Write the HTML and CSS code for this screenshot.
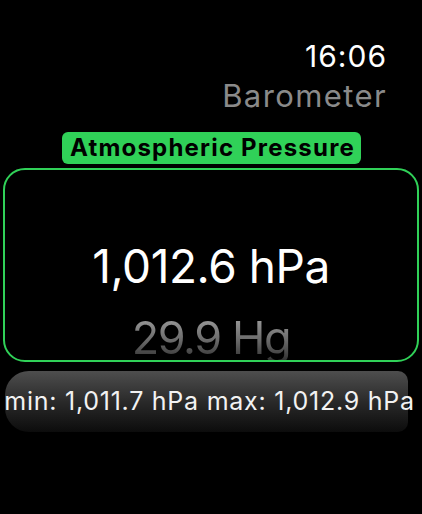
FILE: index.html
```html
<!DOCTYPE html>
<html lang="en">
<head>
<meta charset="utf-8">
<title>Barometer</title>
<link rel="stylesheet" href="styles.css">
</head>
<body>
<div class="screen">
  <header class="top">
    <div class="time">16:06</div>
    <div class="title">Barometer</div>
  </header>
  <div class="tag-row"><span class="tag">Atmospheric Pressure</span></div>
  <section class="card">
    <div class="main">1,012.6 hPa</div>
    <div class="sub">29.9 Hg</div>
  </section>
  <div class="range"><span class="range-text">min: 1,011.7 hPa max: 1,012.9 hPa</span></div>
</div>
</body>
</html>
```
FILE: styles.css
```css
html, body {
  margin: 0;
  padding: 0;
  background: #000;
}
body {
  font-family: Inter, "Noto Sans", "Liberation Sans", sans-serif;
  color: #fff;
}
.screen {
  width: 422px;
  height: 514px;
  display: flex;
  flex-direction: column;
  overflow: hidden;
}
.top {
  padding-top: 36px;
  padding-right: 35px;
  display: flex;
  flex-direction: column;
  align-items: flex-end;
}
.time {
  font-size: 30px;
  line-height: 40px;
  letter-spacing: 1px;
  color: #fff;
}
.title {
  font-size: 31px;
  line-height: 40px;
  letter-spacing: 1.4px;
  color: #8a8a8a;
}
.tag-row {
  margin-top: 16px;
  display: flex;
  justify-content: center;
  padding-left: 1px;
}
.tag {
  background: #30d158;
  color: #000;
  font-weight: 700;
  font-size: 24px;
  line-height: 32px;
  height: 32px;
  letter-spacing: 1.2px;
  padding: 0 6px 0 8px;
  border-radius: 6px;
}
.card {
  box-sizing: border-box;
  margin: 4px 3px 0 3px;
  height: 194px;
  border: 2px solid #30d158;
  border-radius: 22px;
  overflow: hidden;
  display: flex;
  flex-direction: column;
  align-items: center;
  padding-top: 73px;
  gap: 26px;
}
.main {
  font-size: 46px;
  line-height: 46px;
  letter-spacing: -0.45px;
  color: #fff;
}
.sub {
  font-size: 45px;
  line-height: 46px;
  letter-spacing: -1.4px;
  background: linear-gradient(to bottom, #a0a0a0 0%, #6a6a6a 55%, #303030 100%);
  -webkit-background-clip: text;
  background-clip: text;
  color: transparent;
}
.range {
  box-sizing: border-box;
  margin: 9px 0 0 5px;
  width: 403px;
  height: 61px;
  padding-left: 6px;
  border-radius: 24px 10px 10px 24px;
  background: linear-gradient(to bottom, #4e4e4e 0%, #2a2a2a 50%, #0c0c0c 100%);
  display: flex;
  justify-content: center;
}
.range-text {
  white-space: nowrap;
  font-size: 25px;
  line-height: 61px;
  letter-spacing: 0.75px;
  color: #f2f2f2;
}
```
